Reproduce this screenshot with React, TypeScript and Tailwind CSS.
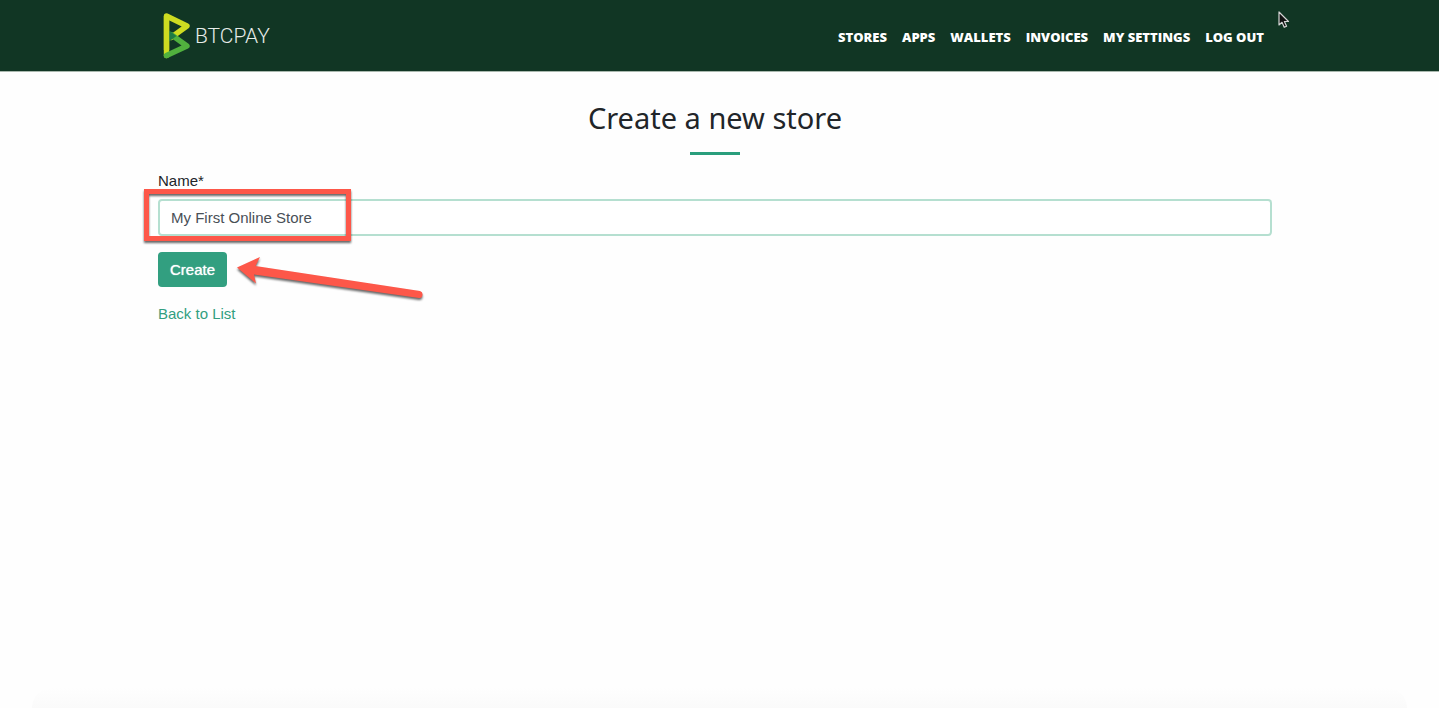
const NAV_ITEMS = ["Stores", "Apps", "Wallets", "Invoices", "My Settings", "Log out"];

function Logo() {
  return (
    <a href="#" aria-label="BTCPay home" className="flex items-center gap-1.5 pl-[5px]">
      <svg width="27" height="46" viewBox="0 0 27 46" fill="none" strokeLinecap="round" strokeLinejoin="round" aria-hidden="true">
        <path d="M3.5 42.5V3L24 13L8 24.5" stroke="#cedc21" strokeWidth="5.4" />
        <path d="M3.5 42.5L24 33L8 21.5" stroke="#51b13e" strokeWidth="5.4" />
        <path d="M6 17.5V28.5L13.5 23Z" fill="#1e7a44" />
        <path d="M3.5 37V3" stroke="#cedc21" strokeWidth="5.4" strokeLinecap="butt" />
      </svg>
      <svg width="73" height="24" viewBox="0 0 73 24" className="overflow-visible" aria-hidden="true">
        <text x="-1" y="19" fill="#e7ece9" fontFamily="Roboto, sans-serif" fontWeight="300" fontSize="21">
          BTCPAY
        </text>
      </svg>
    </a>
  );
}

function MouseCursor() {
  return (
    <svg className="absolute left-full top-[11px] ml-1.5" width="12" height="18" viewBox="0 0 12 18" aria-hidden="true">
      <path d="M1 1V14L4 11.3L6.2 16.3L8.6 15.2L6.4 10.5H10.5Z" fill="#111" stroke="#d5d5d5" strokeWidth="1.2" strokeLinejoin="round" />
    </svg>
  );
}

function Header() {
  return (
    <header className="border-b border-[#a9b8ae] bg-[#113624]">
      <div className="mr-[9px]">
        <div className="relative mx-auto flex h-[71px] w-full max-w-[1114px] items-center justify-between">
          <Logo />
          <nav className="flex gap-[15px] pr-2 pt-0.5 font-['Open_Sans',sans-serif] text-[13px] leading-5 font-extrabold text-white uppercase">
            {NAV_ITEMS.map((item) => (
              <a key={item} href="#" className="whitespace-nowrap">
                {item}
              </a>
            ))}
          </nav>
          <MouseCursor />
        </div>
      </div>
    </header>
  );
}

function Highlight() {
  return (
    <div
      aria-hidden="true"
      className="pointer-events-none absolute -top-2.5 -left-3.5 h-[52px] w-[207px] border-[5px] border-[#fd5749] drop-shadow-[0_2px_1px_rgba(0,0,0,0.6)]"
    />
  );
}

function Arrow() {
  return (
    <svg
      className="pointer-events-none absolute top-1 left-full ml-2.5 overflow-visible drop-shadow-[0_2px_1px_rgba(0,0,0,0.6)]"
      width="188"
      height="46"
      viewBox="0 0 188 46"
      aria-hidden="true"
    >
      <path
        d="M0 11.5L23 1L18.5 10L183 35Q186 36 185.5 39Q185 42.5 182 42L17 18.5L19 27.5Z"
        fill="#fd5749"
      />
    </svg>
  );
}

export default function App() {
  return (
    <div className="flex min-h-screen flex-col bg-[#fefefe] font-['Liberation_Sans',Arial,sans-serif] text-[15px] leading-6 text-[#212529]">
      <Header />
      <main className="mr-[9px] flex-1">
        <div className="mx-auto w-full max-w-[1114px] pt-7">
          <h1 className="text-center font-['Noto_Sans','Open_Sans',sans-serif] text-[29px] leading-9">Create a new store</h1>
          <hr className="mx-auto mt-4 mb-3.5 h-[3px] w-[50px] border-0 bg-[#299e7c]" />
          <form onSubmit={(event) => event.preventDefault()}>
            <label htmlFor="store-name" className="mb-1.5 block">
              Name*
            </label>
            <div className="relative">
              <input
                id="store-name"
                type="text"
                defaultValue="My First Online Store"
                className="block h-[37px] w-full rounded border-2 border-[#b5dfd0] bg-white px-[11px] text-[#495057] outline-none"
              />
              <Highlight />
            </div>
            <div className="relative mt-4 w-fit">
              <button type="submit" className="block h-[35px] rounded bg-[#329f80] px-3 text-white [text-shadow:0_0_1px_#fff]">
                Create
              </button>
              <Arrow />
            </div>
          </form>
          <a href="#" className="mt-[15px] inline-block text-[#329f80]">
            Back to List
          </a>
        </div>
      </main>
      <div aria-hidden="true" className="mx-8 h-5 rounded-t-full bg-linear-to-b from-[#fefefe] to-[#fafafa]" />
    </div>
  );
}
